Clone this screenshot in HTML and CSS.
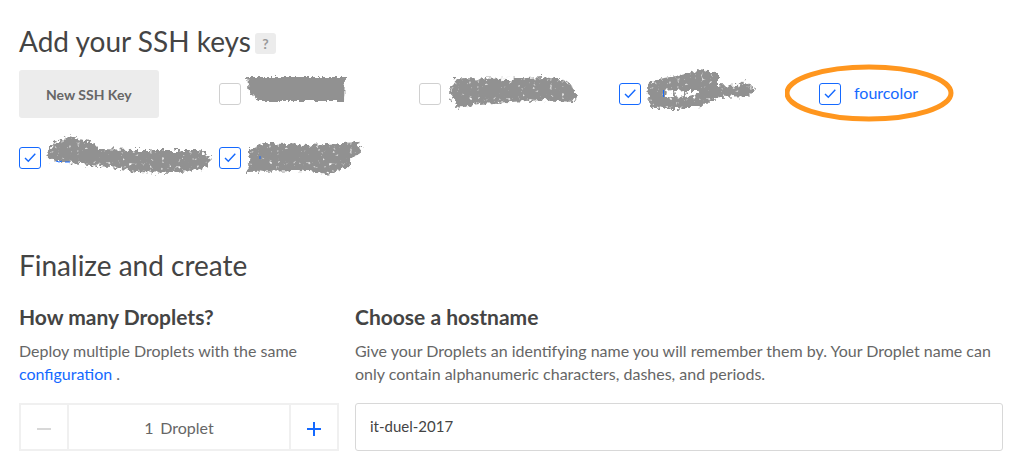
FILE: index.html
```html
<!DOCTYPE html>
<html lang="en">
<head>
<meta charset="utf-8">
<meta name="viewport" content="width=device-width, initial-scale=1">
<title>Create Droplets</title>
<link rel="stylesheet" href="styles.css">
</head>
<body>
<svg class="defs" aria-hidden="true">
  <defs>
    <filter id="chalk" x="-10%" y="-25%" width="120%" height="150%" color-interpolation-filters="sRGB">
      <feTurbulence type="fractalNoise" baseFrequency="0.25" numOctaves="2" seed="4" result="noise"/>
      <feDisplacementMap in="SourceGraphic" in2="noise" scale="9" xChannelSelector="R" yChannelSelector="G" result="rough"/>
      <feColorMatrix in="noise" type="matrix" values="0 0 0 0 0  0 0 0 0 0  0 0 0 0 0  0 0 5 0 -3.3" result="specks"/>
      <feComposite in="rough" in2="specks" operator="out"/>
    </filter>
    <filter id="chalk-solid" x="-10%" y="-25%" width="120%" height="150%" color-interpolation-filters="sRGB">
      <feTurbulence type="fractalNoise" baseFrequency="0.3" numOctaves="2" seed="9" result="noise"/>
      <feDisplacementMap in="SourceGraphic" in2="noise" scale="6" xChannelSelector="R" yChannelSelector="G"/>
    </filter>
    <symbol id="tick" viewBox="0 0 22 22"><path d="M6 11l3.300 3.300 7-7.500" fill="none" stroke="#1469ff" stroke-width="1.4"/></symbol>
  </defs>
</svg>
<main class="page">
  <section class="section">
    <div class="heading">
      <h2 class="title">Add your SSH keys</h2>
      <button class="help" type="button" aria-label="Help">?</button>
    </div>
    <div class="keys">
      <div class="key"><button class="new-key" type="button">New SSH Key</button></div>
      <div class="key">
        <span class="check"><input class="box" type="checkbox" aria-label="SSH key 1"></span>
        <svg class="scribble" viewBox="0 0 178 48" aria-hidden="true"><path filter="url(#chalk-solid)" d="M6 7H104L103 31H17L12 25L8 23Z"/></svg>
      </div>
      <div class="key">
        <span class="check"><input class="box" type="checkbox" aria-label="SSH key 2"></span>
        <svg class="scribble" viewBox="0 0 178 48" aria-hidden="true"><path filter="url(#chalk)" d="M14 8L69 9L102 7L124 10L133 20L136 27L132 32L102 30L69 32L39 34L16 38L9 23Z"/><path class="strand" d="M125 11q9 5 5 13M130 20q8 8 3 12"/></svg>
      </div>
      <div class="key">
        <span class="check"><input class="box" type="checkbox" aria-label="SSH key 3" checked><svg class="tick" aria-hidden="true"><use href="#tick"/></svg></span>
        <svg class="scribble" viewBox="0 0 178 48" aria-hidden="true"><path filter="url(#chalk)" fill-rule="evenodd" d="M6 15L16 9L36 6L57 0L77 2V15L97 16L104 12L114 19L107 26L79 27L59 37L36 39L12 39L7 27ZM24 21L31 20L33 26L25 27ZM34 21L42 20L43 26L36 27ZM45 21L56 21L54 26L46 27Z"/><path class="ink" d="M22.500 20v7"/></svg>
      </div>
      <div class="key key-marked">
        <span class="check"><input class="box" type="checkbox" id="key-fourcolor" checked><svg class="tick" aria-hidden="true"><use href="#tick"/></svg></span>
        <label class="key-name" for="key-fourcolor">fourcolor</label>
        <svg class="ring" viewBox="0 0 170 58" aria-hidden="true"><ellipse cx="84" cy="29" rx="82" ry="26"/></svg>
      </div>
      <div class="key">
        <span class="check"><input class="box" type="checkbox" aria-label="SSH key 5" checked><svg class="tick" aria-hidden="true"><use href="#tick"/></svg></span>
        <svg class="scribble" viewBox="0 0 178 48" aria-hidden="true"><path filter="url(#chalk)" d="M6 18L14 8L29 2L49 8L59 15L92 16L159 16L171 26L162 35L132 39L96 38L69 33L19 28L7 25Z"/><path class="ink" d="M15 27q3 2 6 0M24 28h5"/></svg>
      </div>
      <div class="key">
        <span class="check"><input class="box" type="checkbox" aria-label="SSH key 6" checked><svg class="tick" aria-hidden="true"><use href="#tick"/></svg></span>
        <svg class="scribble" viewBox="0 0 178 48" aria-hidden="true"><path filter="url(#chalk)" d="M21 9L69 11L117 8L120 18L109 25V33L86 40L69 37L6 38L8 28L9 16Z"/><path class="ink" d="M19 22v3"/></svg>
      </div>
    </div>
  </section>

  <section class="section">
    <h2 class="title">Finalize and create</h2>
    <div class="options">
      <div class="option">
        <h3 class="subtitle">How many Droplets?</h3>
        <p class="text">Deploy multiple Droplets with the same <a class="link" href="#">configuration</a> .</p>
        <div class="stepper">
          <button class="step" type="button" aria-label="Remove a Droplet" disabled><svg class="sign" viewBox="0 0 14 14" aria-hidden="true"><path d="M0 7h14"/></svg></button>
          <div class="amount"><input class="count" id="count" type="text" value="1"><label for="count">Droplet</label></div>
          <button class="step" type="button" aria-label="Add a Droplet"><svg class="sign" viewBox="0 0 14 14" aria-hidden="true"><path d="M0 7h14M7 0v14"/></svg></button>
        </div>
      </div>
      <div class="option">
        <h3 class="subtitle"><label for="hostname">Choose a hostname</label></h3>
        <p class="text">Give your Droplets an identifying name you will remember them by. Your Droplet name can only contain alphanumeric characters, dashes, and periods.</p>
        <input class="hostname" id="hostname" type="text" value="it-duel-2017">
      </div>
    </div>
  </section>
</main>
</body>
</html>
```
FILE: styles.css
```css
* { box-sizing: border-box; }

body {
  margin: 0;
  background: #fff;
  color: #444;
  font-family: Lato, "Open Sans", sans-serif;
  font-size: 16px;
}

button, input { font: inherit; }

.defs { position: absolute; width: 0; height: 0; }

.page {
  display: flex;
  flex-direction: column;
  gap: 66px;
  padding: 24px 0 13px 19px;
}

.heading { display: flex; align-items: center; gap: 4px; }

.title {
  margin: 0;
  font-size: 28px;
  font-weight: 400;
  line-height: 34px;
}

.help {
  width: 21px;
  height: 21px;
  margin-top: 4px;
  padding: 0;
  border: 0;
  border-radius: 3px;
  background: #ececec;
  color: #999;
  font-size: 14px;
  font-weight: 700;
  line-height: 21px;
}

.keys {
  display: grid;
  grid-template-columns: repeat(5, minmax(0, 1fr));
  gap: 16px 0;
  margin-top: 12px;
}

.key { display: flex; align-items: center; min-height: 48px; }

.key-marked { position: relative; }

.new-key {
  height: 48px;
  padding: 0 27px;
  border: 0;
  border-radius: 3px;
  background: #ececec;
  color: #666;
  font-size: 14px;
  font-weight: 700;
}

.check { display: grid; flex: none; }

.box, .tick { grid-area: 1 / 1; width: 22px; height: 22px; }

.box {
  appearance: none;
  margin: 0;
  border: 1px solid #d0d0d0;
  border-radius: 3px;
  background: #fff;
}

.box:checked { border-color: #1469ff; }

.tick { pointer-events: none; }

.scribble {
  flex: 1;
  min-width: 0;
  height: 48px;
  overflow: visible;
  fill: #919191;
}

.strand { fill: none; stroke: #919191; }

.ink { fill: none; stroke: #1469ff; }

.key-name { margin-left: 13px; padding-bottom: 3px; color: #1469ff; }

.ring {
  position: absolute;
  top: -6px;
  left: -34px;
  width: 170px;
  height: 58px;
  fill: none;
  stroke: #ff961e;
  stroke-width: 5px;
  pointer-events: none;
}

.options {
  display: grid;
  grid-template-columns: 320px minmax(0, 1fr);
  gap: 16px;
  margin-top: 22px;
  padding-right: 16px;
}

.subtitle {
  margin: 0 0 9px;
  font-size: 21px;
  font-weight: 700;
  line-height: 26px;
}

.text {
  margin: 0 0 18px;
  color: #666;
  line-height: 23px;
}

.link { color: #1469ff; text-decoration: none; }

.stepper {
  display: flex;
  height: 48px;
  border: 2px solid #f0f0f0;
}

.step {
  display: flex;
  align-items: center;
  justify-content: center;
  width: 46px;
  padding: 0;
  border: 0;
  background: #fff;
  color: #1469ff;
}

.step:disabled { color: #d8d8d8; }

.sign { width: 14px; height: 14px; margin-top: 3px; fill: none; stroke: currentColor; stroke-width: 2px; }

.amount {
  display: flex;
  flex: 1;
  align-items: center;
  justify-content: center;
  gap: 6px;
  border: solid #f0f0f0;
  border-width: 0 2px;
  color: #666;
}

.count {
  width: 10px;
  padding: 0;
  border: 0;
  background: none;
  color: inherit;
}

.hostname {
  width: 100%;
  height: 48px;
  padding: 0 14px 2px;
  border: 1px solid #d8d8d8;
  border-radius: 3px;
  background: #fff;
  color: #444;
  font-size: 15px;
}
```
